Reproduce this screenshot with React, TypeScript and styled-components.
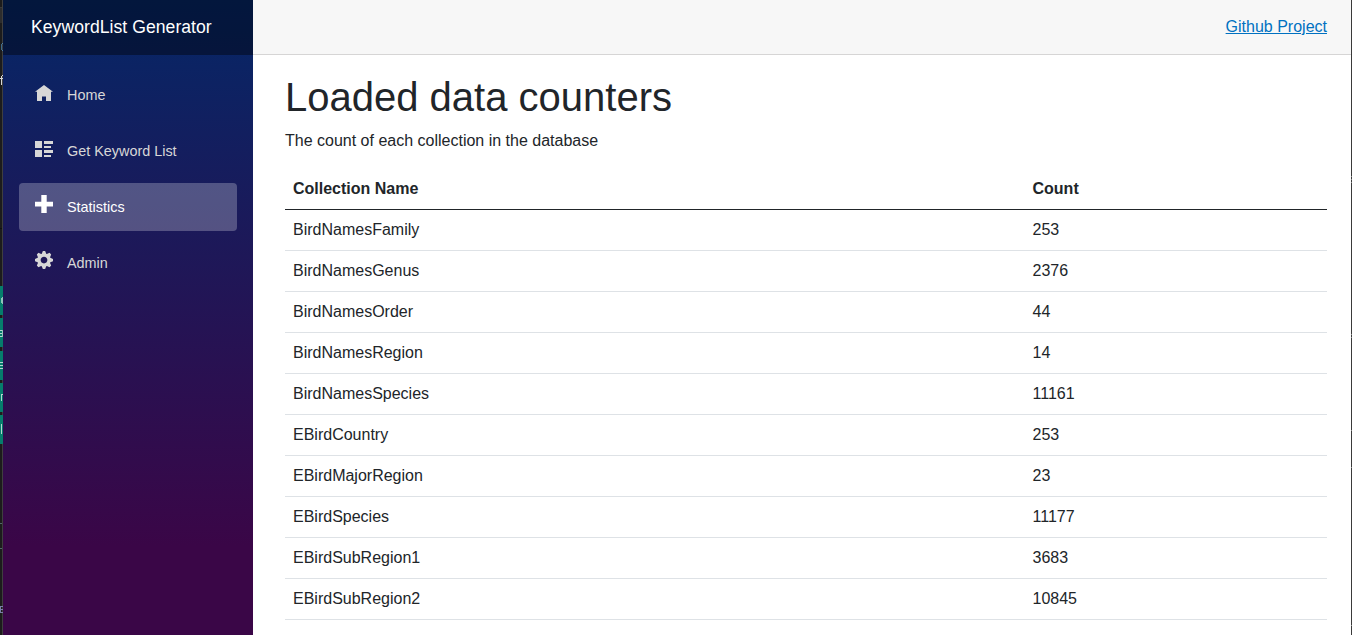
import React from "react";
import styled, { createGlobalStyle } from "styled-components";

const GlobalStyle = createGlobalStyle`
  *, *::before, *::after { box-sizing: border-box; }
  html, body { margin: 0; height: 100%; overflow: hidden; }
  body {
    background: #fff;
    color: #212529;
    font-family: "Liberation Sans", Helvetica, Arial, sans-serif;
    font-size: 16px;
    line-height: 1.5;
  }
  h1, p { margin: 0; }
`;

const Page = styled.div`
  display: flex;
  height: 635px;
  overflow: hidden;
`;

const BackdropLeft = styled.svg`
  display: block;
  flex: 0 0 3px;
  width: 3px;
  height: 635px;
`;

const BackdropRight = styled.svg`
  display: block;
  flex: 0 0 1px;
  width: 1px;
  height: 635px;
`;

const Sidebar = styled.aside`
  flex: 0 0 250px;
  background: linear-gradient(180deg, rgb(5, 39, 103) 0, #3a0647 545px);
`;

const Brand = styled.div`
  display: flex;
  align-items: center;
  height: 55px;
  padding: 0 0 1px 28px;
  background: rgba(0, 0, 0, 0.4);
  color: #fff;
  font-size: 17.6px;
  letter-spacing: 0.04px;
`;

const Nav = styled.nav`
  display: flex;
  flex-direction: column;
  gap: 8px;
  padding: 16px;
`;

const NavItem = styled.a<{ $active?: boolean }>`
  display: flex;
  align-items: flex-start;
  height: 48px;
  padding-left: 16px;
  border-radius: 4px;
  font-size: 14.4px;
  line-height: 48px;
  text-decoration: none;
  color: ${(p) => (p.$active ? "#fff" : "#d7d7d7")};
  background: ${(p) => (p.$active ? "rgba(255, 255, 255, 0.25)" : "transparent")};
`;

const NavIcon = styled.svg`
  width: 18px;
  height: 18px;
  margin: 12px 14px 0 0;
  fill: currentColor;
`;

const Main = styled.main`
  flex: 1;
  min-width: 0;
`;

const TopRow = styled.header`
  display: flex;
  align-items: center;
  justify-content: flex-end;
  height: 55px;
  padding: 0 24px 0 32px;
  background: #f7f7f7;
  border-bottom: 1px solid #d6d5d5;
`;

const TopLink = styled.a`
  color: #0071c1;
  text-decoration: underline;
`;

const Content = styled.article`
  padding: 18px 24px 0 32px;
`;

const Title = styled.h1`
  margin-bottom: 8px;
  font-size: 40px;
  font-weight: 400;
  line-height: 48px;
`;

const Intro = styled.p`
  margin-bottom: 16px;
`;

const Table = styled.table`
  width: 100%;
  table-layout: fixed;
  border-collapse: separate;
  border-spacing: 0;
`;

const HeadCell = styled.th<{ $width?: string }>`
  width: ${(p) => p.$width ?? "auto"};
  padding: 8px;
  text-align: left;
  font-weight: 700;
  border-bottom: 1px solid #212529;
`;

const Cell = styled.td`
  padding: 8px;
  border-bottom: 1px solid #dee2e6;
`;

const navItems = [
  {
    label: "Home",
    viewBox: "0 0 18 18",
    path: "M9 2L0 8.8h2V18h5v-4.5h4V18h5V8.8h2z",
  },
  {
    label: "Get Keyword List",
    viewBox: "0 0 18 18",
    path: "M0 2h7v7H0zM0 11h7v7H0zM9 2h9v3H9zM9 7h7v2H9zM9 11h9v3H9zM9 16h7v2H9z",
  },
  {
    label: "Statistics",
    viewBox: "0 0 18 18",
    path: "M6.3 0h5.4v6.7H18v4.7h-6.3V18H6.3v-6.6H0V6.7h6.3z",
    active: true,
  },
  {
    label: "Admin",
    viewBox: "0 0 8 8",
    path: "M3.5 0l-.5 1.19c-.1.03-.19.08-.28.13l-1.19-.5-.72.72.5 1.19c-.05.1-.09.18-.13.28l-1.19.5v1l1.19.5c.04.1.08.18.13.28l-.5 1.19.72.72 1.19-.5c.09.04.18.09.28.13l.5 1.19h1l.5-1.19c.09-.04.19-.08.28-.13l1.19.5.72-.72-.5-1.19c.04-.09.09-.19.13-.28l1.19-.5v-1l-1.19-.5c-.03-.09-.08-.19-.13-.28l.5-1.19-.72-.72-1.19.5c-.09-.04-.19-.09-.28-.13l-.5-1.19h-1zm.5 2.5c.83 0 1.5.67 1.5 1.5s-.67 1.5-1.5 1.5-1.5-.67-1.5-1.5.67-1.5 1.5-1.5z",
  },
];

const counters: [string, number][] = [
  ["BirdNamesFamily", 253],
  ["BirdNamesGenus", 2376],
  ["BirdNamesOrder", 44],
  ["BirdNamesRegion", 14],
  ["BirdNamesSpecies", 11161],
  ["EBirdCountry", 253],
  ["EBirdMajorRegion", 23],
  ["EBirdSpecies", 11177],
  ["EBirdSubRegion1", 3683],
  ["EBirdSubRegion2", 10845],
];

// Slivers of the dark window behind the page: [y, height, colour]
const leftBands: [number, number, string][] = [
  [7, 1, "#3a3a3a"],
  [8, 15, "#2d2d2d"],
  [228, 1, "#111111"],
  [523, 1, "#52666c"],
  [548, 1, "#52666c"],
];

const tealBlocks = [286, 318, 351, 383, 415];

// [x, y, width, height, colour]
const leftMarks: [number, number, number, number, string][] = [
  [1, 44, 1, 6, "#3d6a8c"],
  [2, 43, 1, 1, "#4d7fa5"],
  [2, 50, 1, 1, "#4d7fa5"],
  [1, 76, 1, 9, "#d8d8d8"],
  [0, 78, 3, 1, "#d8d8d8"],
  [2, 75, 1, 1, "#d8d8d8"],
  [1, 298, 1, 5, "#8fc4b9"],
  [2, 297, 1, 7, "#8fc4b9"],
  [0, 330, 3, 1, "#b3d6cf"],
  [0, 333, 3, 1, "#b3d6cf"],
  [0, 336, 3, 1, "#b3d6cf"],
  [2, 330, 1, 7, "#8fc4b9"],
  [0, 362, 3, 1, "#b3d6cf"],
  [0, 365, 3, 1, "#b3d6cf"],
  [0, 368, 3, 1, "#b3d6cf"],
  [1, 394, 1, 7, "#b3d6cf"],
  [2, 394, 1, 1, "#b3d6cf"],
  [1, 424, 1, 10, "#b3d6cf"],
  [0, 606, 3, 1, "#7a7fa8"],
  [0, 609, 3, 1, "#7a7fa8"],
  [0, 612, 3, 1, "#7a7fa8"],
  [0, 606, 1, 7, "#7a7fa8"],
];

const rightMarks = [176, 179, 182, 334, 337, 430, 467, 625];

export default function App() {
  return (
    <>
      <GlobalStyle />
      <Page>
        <BackdropLeft viewBox="0 0 3 635" shapeRendering="crispEdges" aria-hidden>
          <rect width="3" height="635" fill="#1c1c1c" />
          {leftBands.map(([y, h, fill]) => (
            <rect key={y} y={y} width="3" height={h} fill={fill} />
          ))}
          <rect x="2" width="1" height="635" fill="#3f3f3f" />
          {tealBlocks.map((y) => (
            <rect key={y} y={y} width="3" height="29" fill="#067d6c" />
          ))}
          {leftMarks.map(([x, y, w, h, fill], i) => (
            <rect key={i} x={x} y={y} width={w} height={h} fill={fill} />
          ))}
        </BackdropLeft>
        <Sidebar>
          <Brand>KeywordList Generator</Brand>
          <Nav>
            {navItems.map((item) => (
              <NavItem key={item.label} $active={item.active}>
                <NavIcon viewBox={item.viewBox} aria-hidden>
                  <path d={item.path} />
                </NavIcon>
                {item.label}
              </NavItem>
            ))}
          </Nav>
        </Sidebar>
        <Main>
          <TopRow>
            <TopLink>Github Project</TopLink>
          </TopRow>
          <Content>
            <Title>Loaded data counters</Title>
            <Intro>The count of each collection in the database</Intro>
            <Table>
              <thead>
                <tr>
                  <HeadCell $width="739.5px">Collection Name</HeadCell>
                  <HeadCell>Count</HeadCell>
                </tr>
              </thead>
              <tbody>
                {counters.map(([name, count]) => (
                  <tr key={name}>
                    <Cell>{name}</Cell>
                    <Cell>{count}</Cell>
                  </tr>
                ))}
              </tbody>
            </Table>
          </Content>
        </Main>
        <BackdropRight viewBox="0 0 1 635" shapeRendering="crispEdges" aria-hidden>
          <rect width="1" height="635" fill="#3a3a3a" />
          {rightMarks.map((y) => (
            <rect key={y} y={y} width="1" height="1" fill="#8a8a8a" />
          ))}
        </BackdropRight>
      </Page>
    </>
  );
}
